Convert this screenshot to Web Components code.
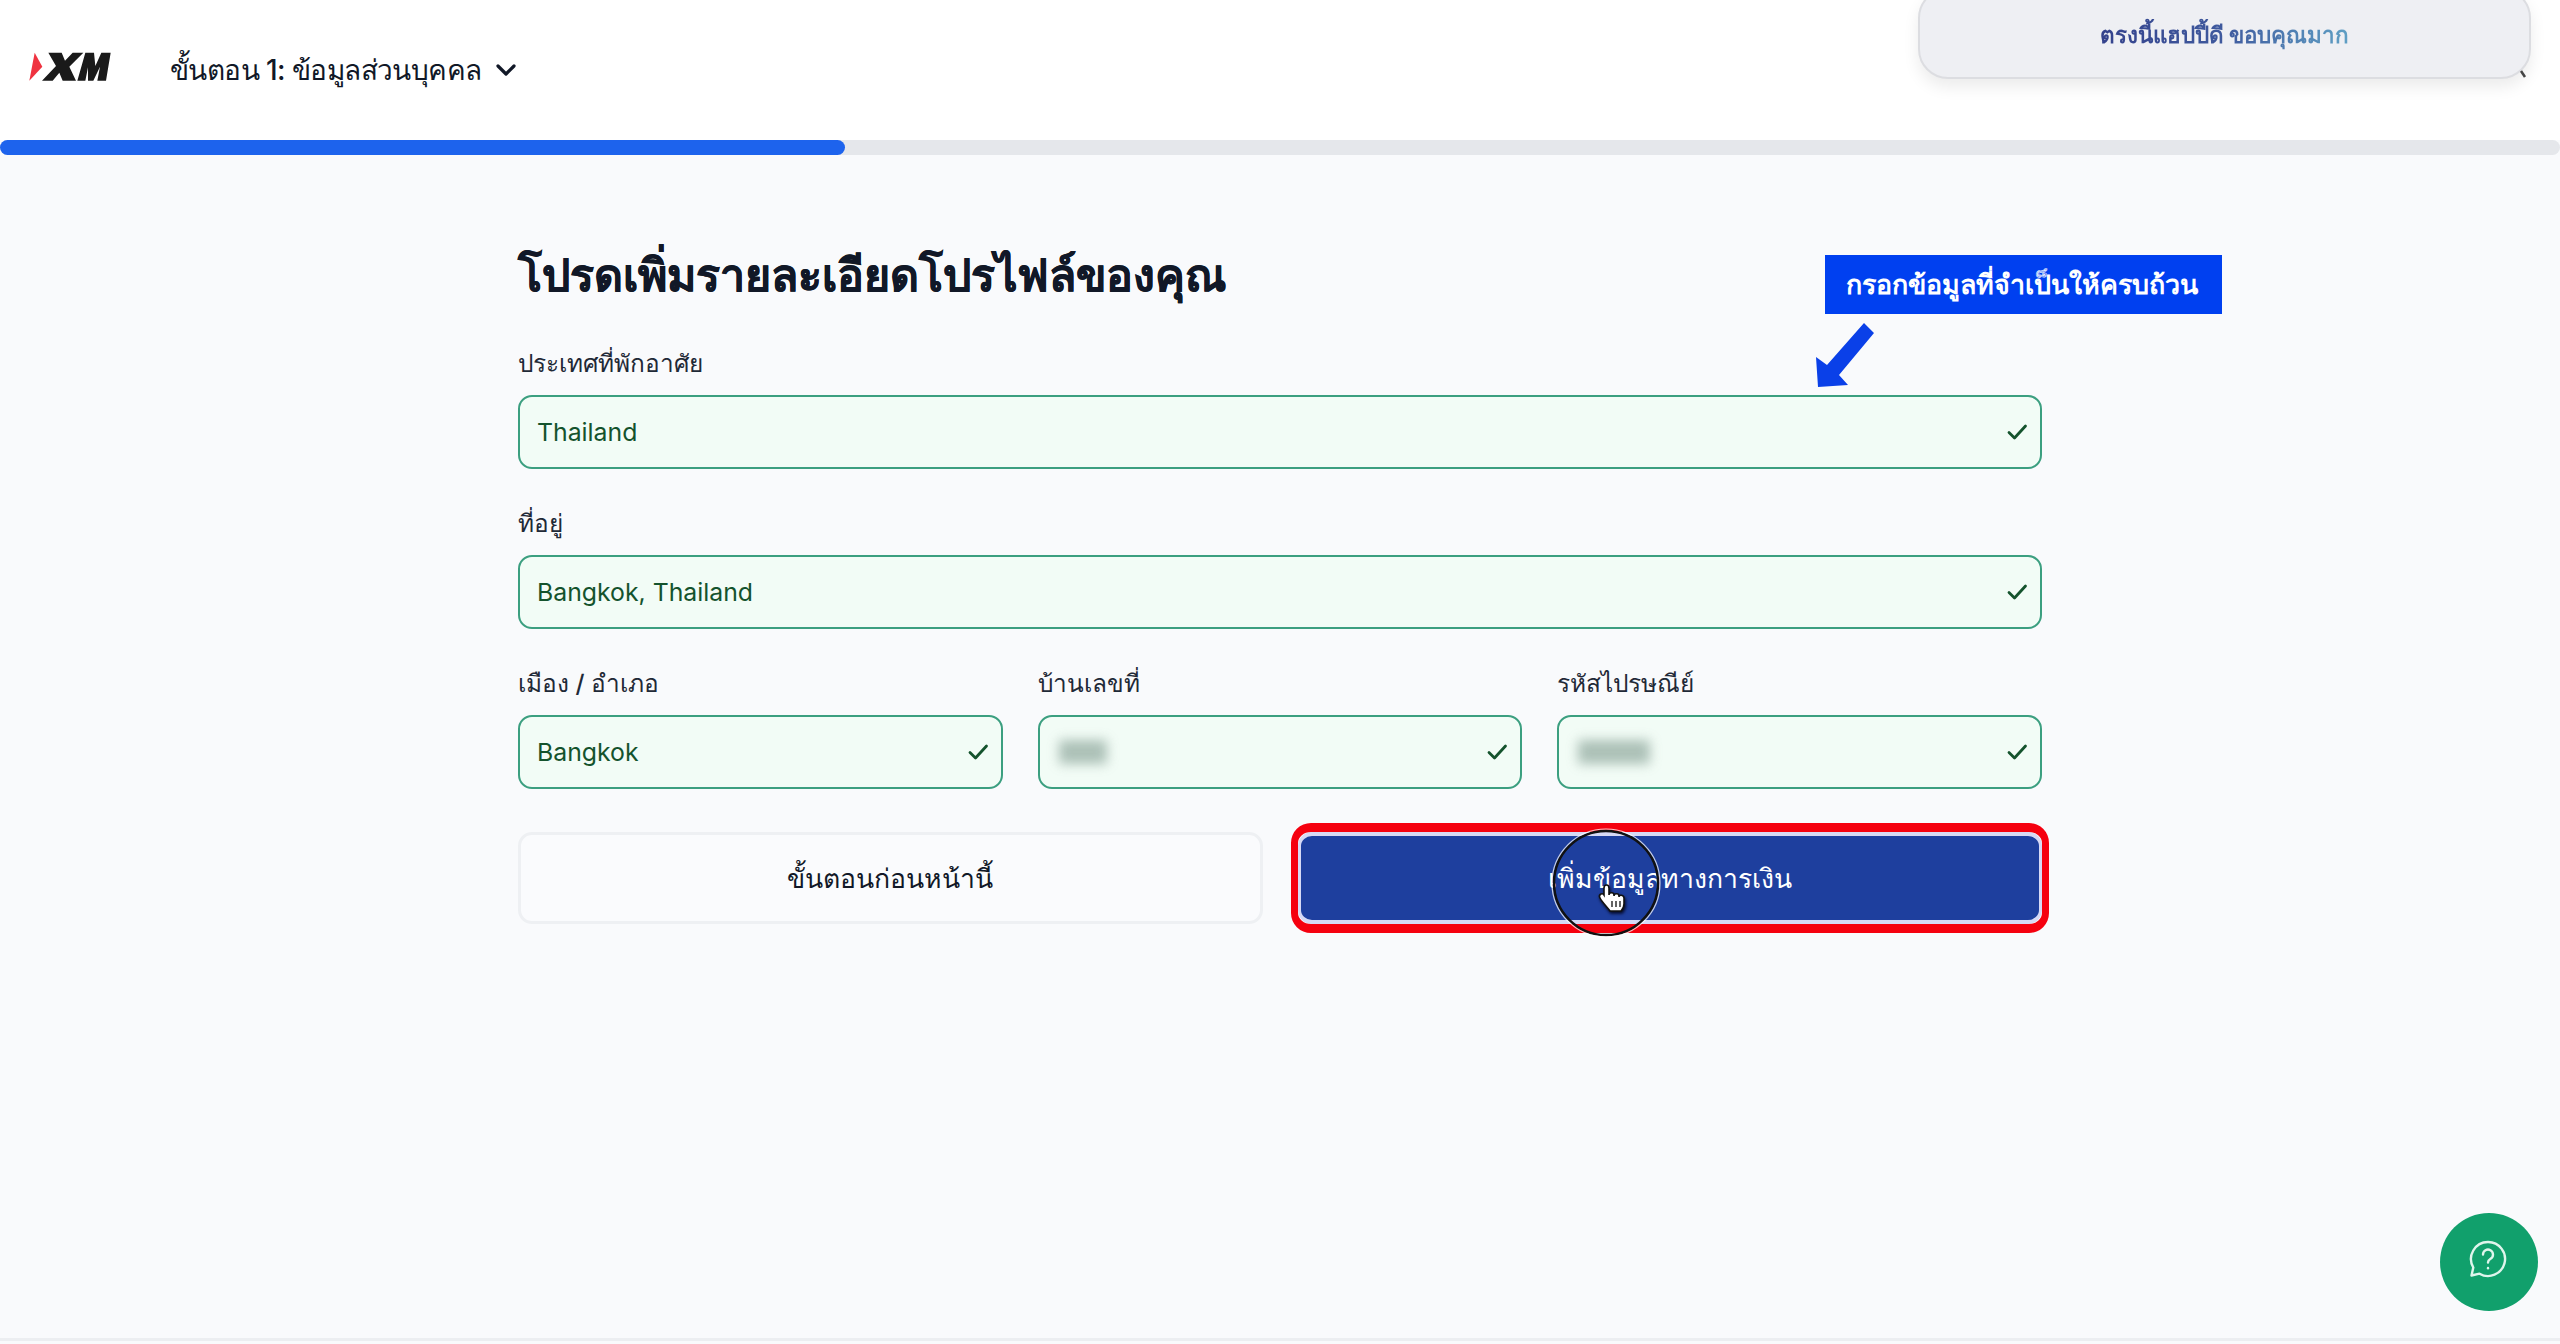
<!DOCTYPE html>
<html lang="th">
<head>
<meta charset="utf-8">
<title>XM</title>
<style>
  html, body { margin: 0; height: 100%; }
  body { background: #f9fafc; font-family: Inter, "Noto Sans", sans-serif; color: #111827; }
  #page { position: relative; width: 2560px; height: 1341px; overflow: hidden; border-bottom: 3px solid #eceef1; box-sizing: border-box; }
</style>
</head>
<body>
<div id="page">
  <xm-header step="ขั้นตอน 1: ข้อมูลส่วนบุคคล"></xm-header>
  <xm-progress value="33"></xm-progress>
  <xm-main>
    <h-title>โปรดเพิ่มรายละเอียดโปรไฟล์ของคุณ</h-title>
    <xm-row>
      <xm-field label="ประเทศที่พักอาศัย" value="Thailand"></xm-field>
    </xm-row>
    <xm-row>
      <xm-field label="ที่อยู่" value="Bangkok, Thailand"></xm-field>
    </xm-row>
    <xm-row>
      <xm-field label="เมือง / อำเภอ" value="Bangkok"></xm-field>
      <xm-field label="บ้านเลขที่" blur="48"></xm-field>
      <xm-field label="รหัสไปรษณีย์" blur="72"></xm-field>
    </xm-row>
    <xm-actions>
      <xm-button>ขั้นตอนก่อนหน้านี้</xm-button>
      <xm-button primary>เพิ่มข้อมูลทางการเงิน</xm-button>
    </xm-actions>
  </xm-main>
  <xm-toast><span>ตรงนี้แฮปปี้ดี ขอบคุณมาก</span></xm-toast>
  <xm-callout>กรอกข้อมูลที่จำเป็นให้ครบถ้วน</xm-callout>
  <xm-pointer></xm-pointer>
  <xm-help></xm-help>
</div>

<script>
// every element gets the same little setup: a shadow root + its own style/markup
class Base extends HTMLElement {
    constructor(){
        super();
        this.shadow = this.attachShadow({mode: 'open'});
        this.shadow.innerHTML = this.markup();
    }
    markup() { return ''; }
}

const tick = `<svg width="22" height="22" viewBox="0 0 22 22" fill="none" stroke="#14532d" stroke-width="2.8" stroke-linecap="round" stroke-linejoin="round"><path d="M3 11.5l5.5 5.5L19.5 5"/></svg>`;

customElements.define("xm-header", class extends Base {
    markup() {
        return `<style>
            :host { display: flex; align-items: center; height: 140px; background: #fff; padding: 0 0 0 20px; box-sizing: border-box; }
            svg.logo { display: block; margin-top: -4px; }
            .step { margin-left: 50px; font-size: 28px; letter-spacing: -.58px; font-weight: 500; color: #111827; display: flex; align-items: center; gap: 14px; }
        </style>
        <svg class="logo" width="100" height="56" viewBox="0 0 300 168">
            <path d="M44 38L67 80L28 122Z" fill="#ef3340"/>
            <path d="M85 38H125L135 62L158 38H190L148 80L168 122H128L118 98L98 122H66L108 78Z" fill="#1a1a1a"/>
            <path d="M172 122L196 38H222L226 78L244 38H272L258 122H232L240 80L220 122H204L204 82L196 122Z" fill="#1a1a1a"/>
        </svg>
        <div class="step"><span id="t"></span>
            <svg width="22" height="14" viewBox="0 0 22 14" fill="none" stroke="#111827" stroke-width="3.2" stroke-linecap="round" stroke-linejoin="round"><path d="M3 3l8 8 8-8"/></svg>
        </div>`;
    }
    connectedCallback() { this.shadow.getElementById("t").textContent = this.getAttribute("step"); }
});

customElements.define("xm-progress", class extends Base {
    markup() {
        return `<style>
            :host { display: block; height: 15px; background: #e5e7eb; border-radius: 8px; }
            div { height: 100%; background: #1d63ed; border-radius: 8px; }
        </style><div></div>`;
    }
    connectedCallback() { this.shadow.querySelector("div").style.width = this.getAttribute("value") + "%"; }
});

customElements.define("xm-main", class extends Base {
    markup() {
        return `<style>
            :host { display: flex; flex-direction: column; width: 1524px; margin: 0 auto; padding-top: 92px; }
        </style><slot></slot>`;
    }
});

customElements.define("h-title", class extends Base {
    markup() {
        return `<style>
            :host { display: block; font-size: 44.6px; font-weight: 700; line-height: 56px; margin-bottom: 44px; color: #111827; -webkit-text-stroke: .4px #111827; }
        </style><slot></slot>`;
    }
});

customElements.define("xm-row", class extends Base {
    markup() {
        return `<style>
            :host { display: flex; gap: 35px; margin-bottom: 38px; }
        </style><slot></slot>`;
    }
});

customElements.define("xm-field", class extends Base {
    markup() {
        return `<style>
            :host { display: flex; flex-direction: column; flex: 1 1 0; min-width: 0; }
            label { font-size: 24.4px; font-weight: 500; line-height: 32px; margin-bottom: 16px; color: #1f2937; }
            .box { height: 74px; box-sizing: border-box; border: 2.5px solid #3c9f80; border-radius: 14px; background: #f2fcf6;
                   display: flex; align-items: center; justify-content: space-between; padding: 0 12px 0 17px;
                   font-size: 24.8px; color: #14532d; }
            .blur { display: block; height: 24px; background: #8fa89d; filter: blur(6px); opacity: .7; margin-left: 2px; }
        </style>
        <label></label>
        <div class="box"><span class="v"></span>${tick}</div>`;
    }
    connectedCallback() {
        this.shadow.querySelector("label").textContent = this.getAttribute("label");
        const v = this.shadow.querySelector(".v");
        if (this.hasAttribute("blur")) {
            v.className = "blur";
            v.style.width = this.getAttribute("blur") + "px";
        } else {
            v.textContent = this.getAttribute("value");
        }
    }
});

customElements.define("xm-actions", class extends Base {
    markup() {
        return `<style>
            :host { display: flex; gap: 35px; margin-top: 5px; }
        </style><slot></slot>`;
    }
});

customElements.define("xm-button", class extends Base {
    markup() {
        return `<style>
            :host { display: flex; flex: 1 1 0; height: 92px; box-sizing: border-box; align-items: center; justify-content: center;
                    font-size: 26.6px; font-weight: 500; border-radius: 14px; background: #fafbfd; border: 3px solid #eef0f3; color: #111827; position: relative; }
            :host([primary]) { background: #1e3f9e; border: solid #d6d9f5; border-width: 4px 3px; color: #fff; }
            /* red marker drawn over the screenshot */
            :host([primary])::after { content: ""; position: absolute; inset: -13px -10px; border: solid #f5000f; border-width: 9px 7px; border-radius: 20px; pointer-events: none; }
        </style><slot></slot>`;
    }
});

customElements.define("xm-toast", class extends Base {
    markup() {
        return `<style>
            :host { position: absolute; left: 1918px; top: -12px; width: 613px; height: 91px; box-sizing: border-box; padding-top: 2px;
                    display: flex; align-items: center; justify-content: center; background: #eeeff3; border: 2px solid #dcdde1; border-radius: 30px;
                    box-shadow: 0 8px 16px rgba(0,0,0,.08); font-size: 22.4px; font-weight: 700; }
            ::slotted(span) { background: linear-gradient(90deg, #34428c 0%, #3f5a9e 50%, #5f9fc4 100%); -webkit-background-clip: text; background-clip: text; color: transparent; }
        </style><slot></slot>`;
    }
});

customElements.define("xm-callout", class extends Base {
    markup() {
        return `<style>
            :host { position: absolute; left: 1825px; top: 255px; width: 397px; height: 59px; box-sizing: border-box; padding-right: 4px; display: flex; align-items: center; justify-content: center;
                    background: #0040f0; color: #fff; font-size: 26.8px; font-weight: 600; }
        </style><slot></slot>`;
    }
});

// arrow + circle + hand cursor, all lying over the page
customElements.define("xm-pointer", class extends Base {
    markup() {
        return `<style>
            :host { position: absolute; left: 0; top: 0; width: 2560px; height: 1344px; pointer-events: none; }
            svg { position: absolute; left: 0; top: 0; }
            .hand { filter: drop-shadow(1px 2px 1.5px rgba(0,0,20,.85)); transform: translateX(3px); }
        </style>
        <svg width="2560" height="1344" viewBox="0 0 2560 1344" fill="none">
            <path d="M1864 323L1874 333L1839 375L1848 385L1818 387L1816 357L1827 365Z" fill="#0a40e8"/>
            <path d="M2521 71l4 6" stroke="#444" stroke-width="2.5"/>
            <circle cx="1606" cy="883" r="52" stroke="#111" stroke-width="2.5"/>
            <circle cx="1606" cy="883" r="54" stroke="#fff" stroke-width="1.2" opacity=".75"/>
            <g class="hand">
                <path d="M1601 888c0-4 5-4 5 0v7c0-3 5-3 5 0v1c0-3 5-3 5 0v1c0-3 5-2 5 1v6c0 3-1 5-3 7h-11c-2-3-8-9-10-13-2-3 2-6 4-3z" fill="#fff" stroke="#111" stroke-width="1.6"/>
                <path d="M1609 901v6M1613 901v6M1617 901v6" stroke="#111" stroke-width="1.3"/>
            </g>
        </svg>`;
    }
});

customElements.define("xm-help", class extends Base {
    markup() {
        return `<style>
            :host { position: absolute; left: 2440px; top: 1213px; width: 98px; height: 98px; border-radius: 50%; background: #11a06c; display: flex; align-items: center; justify-content: center; }
        </style>
        <svg width="40" height="40" viewBox="0 0 40 40" fill="none" stroke="#dff5ec" stroke-width="2.4" stroke-linecap="round" stroke-linejoin="round" style="margin:-6px 0 0 -2px">
            <path d="M20 3a17 17 0 1 1-8.5 31.7L3.5 36.5l1.8-8A17 17 0 0 1 20 3z"/>
            <path d="M15 15.5a5 5 0 1 1 7.6 4.3c-1.6 1-2.6 2-2.6 3.7"/>
            <path d="M20 29v.2"/>
        </svg>`;
    }
});
</script>
</body>
</html>
